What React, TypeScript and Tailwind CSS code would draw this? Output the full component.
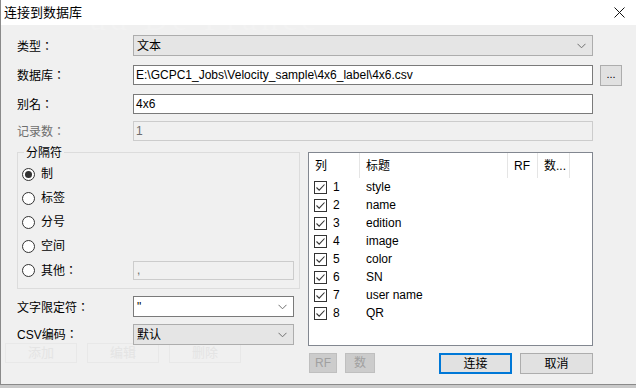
import React from "react";

const rows = [
  { n: 1, t: "style" },
  { n: 2, t: "name" },
  { n: 3, t: "edition" },
  { n: 4, t: "image" },
  { n: 5, t: "color" },
  { n: 6, t: "SN" },
  { n: 7, t: "user name" },
  { n: 8, t: "QR" },
];

function Chevron() {
  return (
    <svg width="9" height="6" viewBox="0 0 9 6" className="shrink-0">
      <path d="M0.5 0.8 L4.5 4.8 L8.5 0.8" fill="none" stroke="#707070" strokeWidth="1" />
    </svg>
  );
}

function Radio({ checked }: { checked?: boolean }) {
  return (
    <span className="w-[13px] h-[13px] rounded-full border border-[#333] bg-white flex items-center justify-center shrink-0">
      {checked && <span className="w-[7px] h-[7px] rounded-full bg-[#333]" />}
    </span>
  );
}

function Check() {
  return (
    <span className="w-[13px] h-[13px] border border-[#333] bg-white flex items-center justify-center shrink-0">
      <svg width="11" height="11" viewBox="0 0 11 11">
        <path d="M1.5 5.5 L4.2 8.2 L9.5 2.5" fill="none" stroke="#333" strokeWidth="1.1" />
      </svg>
    </span>
  );
}

function Label({ text, className = "" }: { text: string; className?: string }) {
  return <span className={`font-['Noto_Sans_CJK_TC','Noto_Sans_CJK_SC',sans-serif] ${className}`}>{text}</span>;
}

export default function App() {
  return (
    <div className="w-[636px] h-[388px] bg-[#c9c9c9] overflow-hidden font-['Liberation_Sans','Noto_Sans_CJK_SC',sans-serif] text-[12px] text-black">
      <div className="relative h-[385px] bg-[#f0f0f0] border-l border-b border-[#8a8a8a] flex flex-col">
        {/* ghost of the window underneath */}
        <div className="absolute left-[88px] top-[-7px] font-['Liberation_Serif',serif] text-[34px] tracking-[4px] text-[#f2f2f2] pointer-events-none">
          ud De France
        </div>
        <div className="absolute left-[4px] top-[343px] flex gap-[10px] pointer-events-none">
          {["添加", "编辑", "删除"].map((g) => (
            <div key={g} className="w-[72px] h-[20px] border border-[#e8e8e8] flex items-center justify-center text-[13px] text-[#e4e4e4]">
              {g}
            </div>
          ))}
        </div>

        {/* title bar */}
        <div className="relative h-[25px] bg-white flex items-center pl-[3px] pr-[11px] shrink-0">
          <span className="text-[13px] mr-auto">连接到数据库</span>
          <svg width="11" height="11" viewBox="0 0 11 11">
            <path d="M0.5 0.5 L10.5 10.5 M10.5 0.5 L0.5 10.5" stroke="#111" strokeWidth="1" />
          </svg>
        </div>

        {/* top fields */}
        <div className="relative grid grid-cols-[109px_460px_22px] gap-x-[7px] pl-[16px] pt-[10px] items-center">
          <Label text="类型：" />
          <div className="h-[21px] bg-[#e5e5e5] border border-[#adadad] flex items-center pl-[3px] pr-[6px]">
            <span className="mr-auto">文本</span>
            <Chevron />
          </div>
          <span />

          <Label text="数据库：" className="mt-[8px]" />
          <div className="mt-[8px] h-[20px] bg-white border border-[#7a7a7a] flex items-center pl-[2px] overflow-hidden whitespace-nowrap">
            E:\GCPC1_Jobs\Velocity_sample\4x6_label\4x6.csv
          </div>
          <div className="mt-[9px] h-[21px] bg-[#e1e1e1] border border-[#adadad] flex items-center justify-center text-[11px] leading-none pb-[3px]">
            ...
          </div>

          <Label text="别名：" className="mt-[8px]" />
          <div className="mt-[8px] h-[20px] bg-white border border-[#7a7a7a] flex items-center pl-[2px]">4x6</div>
          <span />

          <Label text="记录数：" className="mt-[7px] text-[#6d6d6d]" />
          <div className="mt-[7px] h-[20px] bg-[#f0f0f0] border border-[#cccccc] flex items-center pl-[2px] text-[#6d6d6d]">1</div>
          <span />
        </div>

        {/* lower area */}
        <div className="relative flex gap-[8px] pl-[16px] mt-[11px]">
          <div className="w-[283px] flex flex-col">
            <div className="relative h-[137px] border border-[#dcdcdc] pl-[4px] pt-[9px] flex flex-col">
              <span className="absolute left-[6px] top-[-9px] px-[2px] bg-[#f0f0f0]">分隔符</span>
              {["制", "标签", "分号", "空间"].map((l, i) => (
                <div key={l} className="h-[24px] flex items-center gap-[6px]">
                  <Radio checked={i === 0} />
                  <span>{l}</span>
                </div>
              ))}
              <div className="h-[24px] flex items-center gap-[6px]">
                <Radio />
                <Label text="其他：" className="w-[86px]" />
                <div className="w-[161px] h-[19px] border border-[#cccccc] bg-[#f0f0f0] flex items-center pl-[3px] text-[#6d6d6d]">,</div>
              </div>
            </div>

            <div className="flex items-center mt-[7px]">
              <Label text="文字限定符：" className="w-[116px]" />
              <div className="w-[161px] h-[21px] bg-white border border-[#7a7a7a] flex items-center pl-[3px] pr-[6px]">
                <span className="mr-auto">"</span>
                <Chevron />
              </div>
            </div>
            <div className="flex items-center mt-[7px]">
              <span className="w-[116px]">
                CSV<Label text="编码：" />
              </span>
              <div className="w-[161px] h-[21px] bg-[#e5e5e5] border border-[#adadad] flex items-center pl-[3px] pr-[6px]">
                <span className="mr-auto">默认</span>
                <Chevron />
              </div>
            </div>
          </div>

          <div className="w-[285px] flex flex-col">
            <div className="h-[194px] bg-white border border-[#828790] flex flex-col">
              <div className="h-[25px] flex shrink-0">
                <div className="w-[51px] border-r border-[#e5e5e5] pl-[6px] flex items-center">列</div>
                <div className="w-[148px] border-r border-[#e5e5e5] pl-[6px] flex items-center">标题</div>
                <div className="w-[30px] border-r border-[#e5e5e5] pl-[6px] flex items-center">RF</div>
                <div className="w-[32px] border-r border-[#e5e5e5] pl-[6px] flex items-center">数...</div>
              </div>
              {rows.map((r) => (
                <div key={r.n} className="h-[18px] flex items-center pl-[5px]">
                  <Check />
                  <span className="ml-[6px] w-[33px]">{r.n}</span>
                  <span>{r.t}</span>
                </div>
              ))}
            </div>

            <div className="flex mt-[7px] pl-[1px]">
              <div className="w-[28px] h-[20px] bg-[#cccccc] border border-[#bfbfbf] text-[#a0a0a0] flex items-center justify-center">RF</div>
              <div className="ml-[8px] w-[30px] h-[20px] bg-[#cccccc] border border-[#bfbfbf] text-[#a0a0a0] flex items-center justify-center">数</div>
              <div className="ml-auto w-[73px] h-[21px] bg-[#e1e1e1] border-2 border-[#0078d7] flex items-center justify-center">连接</div>
              <div className="ml-[8px] w-[73px] h-[21px] bg-[#e1e1e1] border border-[#adadad] flex items-center justify-center">取消</div>
            </div>
          </div>
        </div>
      </div>
    </div>
  );
}
